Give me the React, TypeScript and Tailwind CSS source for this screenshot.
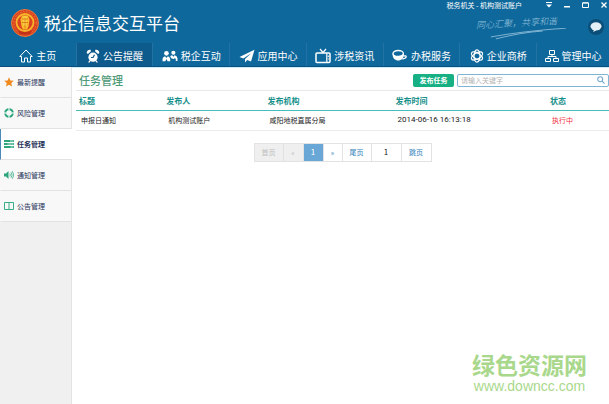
import type { ReactNode } from "react";
import clsx from "clsx";

interface NavItem {
  label: string;
  icon: ReactNode;
  active?: boolean;
}

const navItems: NavItem[] = [
  {
    label: "主页",
    icon: (
      <svg viewBox="0 0 14 14" className="size-3.5" fill="none" stroke="currentColor" strokeWidth="1">
        <path d="M.8 7.500 7 1l6.200 6.500H11.500v5.500h-3V9h-3v4h-3V7.500z" />
      </svg>
    ),
  },
  {
    label: "公告提醒",
    active: true,
    icon: (
      <svg viewBox="0 0 14 14" className="size-3.5" fill="currentColor">
        <circle cx="7" cy="8.200" r="4.600" />
        <path d="M.8 4.200A3 3 0 0 1 4.600.8L5 2.200 2 5zM13.200 4.200A3 3 0 0 0 9.400.8L9 2.200 12 5zM3.200 11.200l1.300 1.200-1 1.100H2.200zM10.800 11.200l-1.300 1.200 1 1.100h1.300z" />
        <path d="M8.500 5.800 7 8.500H5" stroke="#0d5a8c" strokeWidth="1.200" fill="none" />
      </svg>
    ),
  },
  {
    label: "税企互动",
    icon: (
      <svg viewBox="0 0 18 14" className="h-3.5 w-4" fill="currentColor">
        <circle cx="5" cy="4" r="2.600" />
        <path d="M.6 13V10.500Q.8 7.600 3.400 7.200L5 9.200l1.600-2Q9 7.600 9.200 10.500V13H6.300L5 10.500 3.700 13z" />
        <circle cx="12.800" cy="3.300" r="2.300" />
        <path d="M9.200 7.400Q10 6.300 11.500 6.200l1.300 1.700 1.300-1.700Q17 6.700 17.400 9.400V12.500H15.500V10l-1.200-.5-1.500 1-2.400-1z" />
      </svg>
    ),
  },
  {
    label: "应用中心",
    icon: (
      <svg viewBox="0 0 16 14" className="h-3.5 w-4" fill="currentColor">
        <path d="M15.500.8.500 8l3.800 1.400L12.500 4 6 10.100V13.500l2.200-2.500 3.800 1.600z" />
      </svg>
    ),
  },
  {
    label: "涉税资讯",
    icon: (
      <svg viewBox="0 0 16 15" className="h-4 w-4" fill="none" stroke="currentColor">
        <rect x="1" y="4.500" width="14" height="9.500" rx="1" strokeWidth="1.500" />
        <path d="M5 .5 8 4l3-3.500M11.800 5v8.500" strokeWidth="1.200" />
        <path d="M13.300 7v1.500M13.300 10v1" strokeWidth="1" />
      </svg>
    ),
  },
  {
    label: "办税服务",
    icon: (
      <svg viewBox="0 0 16 14" className="h-3.5 w-4">
        <path d="M.5 4.500c0 5 2.700 7 5.700 7s5.800-2 5.800-7z" fill="currentColor" />
        <ellipse cx="6.200" cy="4.500" rx="5.200" ry="3" fill="#0f689c" stroke="currentColor" strokeWidth="1.300" />
        <path d="M11.500 7q2.800-.7 2.700.8T10.500 10" fill="none" stroke="currentColor" strokeWidth="1.300" />
      </svg>
    ),
  },
  {
    label: "企业商桥",
    icon: (
      <svg viewBox="0 0 14 14" className="size-3.5" fill="none" stroke="currentColor" strokeWidth="1.200">
        <ellipse cx="7" cy="7" rx="3" ry="6.200" />
        <ellipse cx="7" cy="7" rx="3" ry="6.200" transform="rotate(60 7 7)" />
        <ellipse cx="7" cy="7" rx="3" ry="6.200" transform="rotate(120 7 7)" />
      </svg>
    ),
  },
  {
    label: "管理中心",
    icon: (
      <svg viewBox="0 0 14 14" className="size-3.5" fill="none" stroke="currentColor" strokeWidth="1">
        <path d="M4.500 1.500h5v4h-5zM.5 9.500h5v3h-5zM8.500 9.500h5v3h-5zM7 5.500v2M3 9.500v-2h8v2" />
      </svg>
    ),
  },
];

const sideItems: NavItem[] = [
  {
    label: "最新提醒",
    icon: (
      <svg viewBox="0 0 10 10" className="size-2.5" fill="#f08a1c">
        <path d="m5 .3 1.400 3.100 3.400.4-2.500 2.300.7 3.400L5 7.800 2 9.500l.7-3.400L.2 3.800l3.400-.4z" />
      </svg>
    ),
  },
  {
    label: "风险管理",
    icon: (
      <svg viewBox="0 0 10 10" className="size-2.5" fill="none">
        <circle cx="5" cy="5" r="3.800" stroke="#2ba57a" strokeWidth="2" />
        <path d="M5 0v3M5 7v3M0 5h3M7 5h3" stroke="#d3eee2" strokeWidth="1.400" />
      </svg>
    ),
  },
  {
    label: "任务管理",
    active: true,
    icon: (
      <svg viewBox="0 0 10 10" className="size-2.5">
        <path d="M0 1h10v2H0zM0 4h10v2H0zM0 7h10v2H0z" fill="#2ba57a" />
        <path d="M6 1.500h3.500v1H6zM3.500 4.500h6v1h-6zM6.500 7.500h3v1h-3z" fill="#b5e2cf" />
      </svg>
    ),
  },
  {
    label: "通知管理",
    icon: (
      <svg viewBox="0 0 10 10" className="size-2.5" fill="none" stroke="#3bad86">
        <path d="M0 3.500h2L4.500 1v8L2 6.500H0z" fill="#2ba57a" stroke="none" />
        <path d="M5.800 3.500q1.200 1.500 0 3M7 2.200q2.300 2.800 0 5.600M8.300 1.200q3 3.800 0 7.600" strokeWidth=".8" />
      </svg>
    ),
  },
  {
    label: "公告管理",
    icon: (
      <svg viewBox="0 0 10 10" className="size-2.5" fill="none" stroke="#3bad86">
        <path d="M.5 1.500h9v7h-9zM5 1.500v7.500" />
      </svg>
    ),
  },
];

const tasks = [
  {
    title: "申报日通知",
    publisher: "机构测试账户",
    org: "咸阳地税直属分局",
    time: "2014-06-16 16:13:18",
    status: "执行中",
  },
];

function Emblem() {
  return (
    <svg viewBox="0 0 28 28" className="size-7">
      <circle cx="14" cy="14" r="13.500" fill="#d9431f" stroke="#ea7a3c" />
      <circle cx="14" cy="14" r="11.300" fill="none" stroke="#f0803a" strokeDasharray="1.500 1.500" />
      <circle cx="14" cy="13.500" r="8.500" fill="#d9431f" stroke="#f7b32b" strokeWidth="1.800" />
      <path d="M11 6.500h6l1.500 4-1 7-1.500 3h-4l-1.500-3-1-7z" fill="#f9b92c" />
      <path d="M12.500 7.500h3v9h-3z" fill="#fde04a" />
      <path d="M11 10h6M11 13.500h6M14 8.500v11" stroke="#d8701c" strokeWidth=".8" />
      <path d="M7 21.500q7 3.500 14 0l-1.500 3q-5.500 2.500-11 0z" fill="#c2301a" />
    </svg>
  );
}

function Header() {
  return (
    <header className="border-b border-[#0c4d7d] bg-[#0f689c] text-white">
      <div className="flex h-[43px] justify-between">
        <div className="flex items-center gap-[5px] pt-0.5 pl-[11px]">
          <Emblem />
          <h1 className="text-[17px] leading-5">税企信息交互平台</h1>
        </div>

        <div className="flex flex-col items-end">
          <div className="flex h-[9px] items-center gap-6 pr-0.5">
            <span className="text-[7px] leading-2 whitespace-nowrap">税务机关 - 机构测试账户</span>
            <div className="flex h-2 items-center gap-3">
              <button type="button" aria-label="菜单">
                <svg viewBox="0 0 6 6" className="size-1.5" fill="currentColor">
                  <path d="M0 0h6v1H0zM0 2.500h6L3 5.500z" />
                </svg>
              </button>
              <button type="button" aria-label="最小化">
                <svg viewBox="0 0 6 6" className="size-1.5" fill="currentColor">
                  <path d="M0 4h6v1.500H0z" />
                </svg>
              </button>
              <button type="button" aria-label="最大化">
                <svg viewBox="0 0 7 6" className="h-1.5 w-[7px]" fill="none" stroke="currentColor">
                  <path d="M.5 1h6v4.500h-6zM.5.800h6" />
                </svg>
              </button>
              <button type="button" aria-label="关闭">
                <svg viewBox="0 0 6 6" className="size-1.5" fill="none" stroke="currentColor" strokeWidth="1.300">
                  <path d="m.5.5 5 5M5.500.5l-5 5" />
                </svg>
              </button>
            </div>
          </div>

          <div className="flex items-start gap-5 pt-2 pr-[5px]">
            <div className="flex flex-col text-[#9cc6df]">
              <p className="-rotate-3 text-[9px] leading-3 font-light italic">同心汇聚，共享和谐</p>
              <svg viewBox="0 0 82 12" className="-mt-px ml-3 h-3 w-20" fill="none" stroke="currentColor" strokeWidth=".8">
                <path d="M3 9Q36 3 80 0M8 11Q36 4 56 3" />
              </svg>
            </div>
            <button
              type="button"
              aria-label="消息"
              className="mt-0.5 flex size-4 items-center justify-center rounded-full bg-[#0b4f79]"
            >
              <svg viewBox="0 0 12 10" className="h-2.5 w-3" fill="#e3f0f7">
                <ellipse cx="6" cy="4.300" rx="5.500" ry="4" />
                <path d="M4 7.500 3.200 10 7 8z" />
              </svg>
            </button>
          </div>
        </div>
      </div>

      <nav className="flex h-[23px]">
        {navItems.map((item) => (
          <a
            key={item.label}
            href="#"
            className={clsx(
              "flex w-[12.6%] items-center justify-center gap-[3px] border-r border-[#2273a3] pt-0.5 text-[10px] leading-3 whitespace-nowrap last:flex-1 last:border-r-0",
              item.active && "bg-[#0d5a8c]"
            )}
          >
            {item.icon}
            {item.label}
          </a>
        ))}
      </nav>
    </header>
  );
}

function Sidebar() {
  return (
    <aside className="w-[72px] shrink-0 border-r border-[#e4e4e4] bg-[#f0f0f0]">
      {sideItems.map((item) => (
        <a
          key={item.label}
          href="#"
          className={clsx(
            "flex h-[31px] items-center gap-[3px] border-b border-l border-b-[#e2e2e2] pl-[3px] text-[7px] leading-3 text-[#1f3358]",
            item.active
              ? "-mr-px border-l-[#4a8ab8] bg-white font-bold"
              : "border-l-transparent bg-[#f8f8f8]"
          )}
        >
          {item.icon}
          {item.label}
        </a>
      ))}
    </aside>
  );
}

function Toolbar() {
  return (
    <div className="flex h-[23px] items-center gap-[3px] border-b border-[#e8e8e8] pt-0.5 pl-[3px]">
      <h2 className="mr-auto text-[11px] leading-4 font-medium text-[#4f9a78]">任务管理</h2>
      <button
        type="button"
        className="h-[13px] w-[41px] rounded-xs bg-[#16b084] text-[7px] leading-3 font-bold text-white"
      >
        发布任务
      </button>
      <div className="flex h-[13px] w-[152px] items-center rounded-xs border border-[#7fb4d4] px-[3px]">
        <input
          type="text"
          aria-label="关键字"
          placeholder="请输入关键字"
          className="h-full min-w-0 flex-1 text-[7px] outline-none placeholder:text-[#b4b4b4]"
        />
        <button type="button" aria-label="搜索">
          <svg viewBox="0 0 9 9" className="size-2" fill="none" stroke="#6aa5d0" strokeWidth="1.200">
            <circle cx="3.600" cy="3.600" r="2.800" />
            <path d="m5.700 5.700 2.800 2.800" />
          </svg>
        </button>
      </div>
    </div>
  );
}

function TaskTable() {
  return (
    <table className="w-full table-fixed text-left">
      <thead>
        <tr className="h-[19px] text-[8px] leading-3 text-[#178f8b] *:border-b *:border-[#49bdbb]">
          <th className="w-[16%] pt-0.5 pl-[3px]">标题</th>
          <th className="w-[19%] pt-0.5 pl-[5px]">发布人</th>
          <th className="w-[24%] pt-0.5 pl-[5px]">发布机构</th>
          <th className="w-[29%] pt-0.5 pl-[5px]">发布时间</th>
          <th className="pt-0.5 pl-[5px]">状态</th>
        </tr>
      </thead>
      <tbody>
        {tasks.map((task) => (
          <tr key={task.title} className="h-5 border-b border-[#ebebeb] text-[7px] leading-3 text-[#222]">
            <td className="pl-[5px]">{task.title}</td>
            <td className="pl-[7px]">{task.publisher}</td>
            <td className="pl-[7px]">{task.org}</td>
            <td className="pl-[7px] font-[Roboto] text-[8px]">{task.time}</td>
            <td className="pl-[7px] text-[#f0303c]">{task.status}</td>
          </tr>
        ))}
      </tbody>
    </table>
  );
}

function Pagination() {
  return (
    <div className="mt-3 flex justify-center">
      <div className="flex h-[19px] divide-x divide-[#e2e2e2] border border-[#e2e2e2] text-[7px] leading-3 text-[#2e7cb8]">
        <button type="button" disabled className="w-[29px] bg-[#efefef] text-[#bdbdbd]">
          首页
        </button>
        <button type="button" disabled className="w-5 bg-[#efefef] text-[#bdbdbd]">
          «
        </button>
        <button type="button" className="w-5 bg-[#68a7d6] text-[8px] text-white">
          1
        </button>
        <button type="button" className="w-[19px]">
          »
        </button>
        <button type="button" className="w-[29px]">
          尾页
        </button>
        <input
          type="text"
          aria-label="页码"
          defaultValue="1"
          className="w-[30px] text-center text-[8px] text-[#222] outline-none"
        />
        <button type="button" className="w-[29px]">
          跳页
        </button>
      </div>
    </div>
  );
}

export default function App() {
  return (
    <div className="relative flex min-h-screen flex-col bg-white font-['Noto_Sans_CJK_SC',sans-serif]">
      <Header />
      <div className="flex flex-1">
        <Sidebar />
        <main className="min-w-0 flex-1 border-t border-[#c9f1f8] pl-1">
          <Toolbar />
          <TaskTable />
          <Pagination />
        </main>
      </div>

      <div className="absolute right-[22px] bottom-3 flex flex-col items-center gap-0.5 font-['Liberation_Sans','Noto_Sans_CJK_SC',sans-serif] text-[#a9d88c]">
        <p className="text-[23px] leading-6 font-bold">绿色资源网</p>
        <p className="text-[14px] leading-3">www.downcc.com</p>
      </div>
    </div>
  );
}
